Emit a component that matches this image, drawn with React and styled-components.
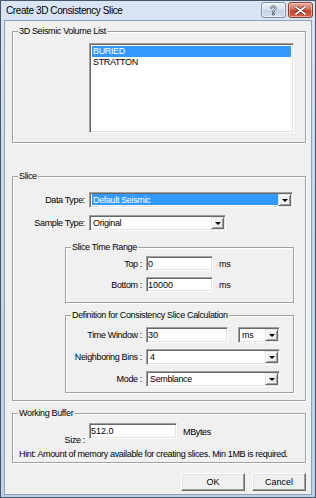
import React from 'react';
import styled, {createGlobalStyle} from 'styled-components';

const GlobalStyle = createGlobalStyle`
html, body {
    margin: 0;
    padding: 0;
    background: #ffffff;
}
body {
    font-family: "Liberation Sans", Arial, sans-serif;
    font-size: 9px;
    line-height: 12px;
    letter-spacing: -0.35px;
    color: #000;
}
* {
    box-sizing: border-box;
}
`;

const Window = styled.div`
width: 316px;
height: 498px;
display: flex;
flex-direction: column;
border: 1px solid #44576b;
padding: 0 3px 2px 3px;
background: linear-gradient(180deg, #d9e5f3 0%, #c6d6e9 40%, #bdd0e6 100%);
`;

const TitleBar = styled.div`
height: 19px;
display: flex;
align-items: center;
justify-content: space-between;
padding: 0 0 0 2px;
font-size: 10px;
letter-spacing: -0.4px;
`;

const Caption = styled.span`
color: #000;
`;

const TitleButtons = styled.div`
display: flex;
gap: 2px;
align-self: flex-start;
margin-top: 1px;
margin-right: -1px;
`;

const CapButton = styled.div`
width: 25px;
height: 16px;
border-radius: 3px;
display: flex;
align-items: center;
justify-content: center;
border: 1px solid ${p => (p.$close ? '#8b3b2f' : '#7f93a9')};
background: ${p =>
    p.$close
        ? 'linear-gradient(180deg, #e9a99b 0%, #d8705d 45%, #c3412b 55%, #d7654f 100%)'
        : 'linear-gradient(180deg, #eef3f9 0%, #d9e3ee 45%, #c6d3e2 55%, #d3dfec 100%)'};
box-shadow: inset 0 0 0 1px rgba(255, 255, 255, 0.45);
`;

const Client = styled.div`
flex: 1;
display: flex;
flex-direction: column;
background: #f0f0f0;
border: 1px solid #8ea2b8;
padding: 4px 5px 0 7px;
`;

const Group = styled.fieldset`
margin: ${p => p.$margin || '0'};
padding: ${p => p.$pad || '0'};
border: 1px solid #a0a0a0;
box-shadow: inset 1px 1px 0 #ffffff, 1px 1px 0 #ffffff;
min-width: 0;
display: flex;
flex-direction: column;
`;

const Legend = styled.legend`
margin-left: 5px;
padding: 0 1px;
line-height: 12px;
height: 12px;
background: #f0f0f0;
`;

const ListBox = styled.div`
width: 205px;
height: 90px;
margin-left: 76px;
background: #fff;
border: 1px solid;
border-color: #a0a0a0 #ffffff #ffffff #a0a0a0;
box-shadow: inset 1px 1px 0 #696969, inset -1px -1px 0 #e3e3e3;
padding: 2px;
`;

const ListItem = styled.div`
height: 11px;
line-height: 11px;
padding-left: 1px;
background: ${p => (p.$selected ? '#3399ff' : 'transparent')};
color: ${p => (p.$selected ? '#fff' : '#000')};
`;

const Rows = styled.div`
display: flex;
flex-direction: column;
gap: ${p => p.$gap || 6}px;
`;

const Row = styled.div`
display: flex;
align-items: ${p => p.$align || 'center'};
`;

const Label = styled.span`
width: ${p => p.$width}px;
margin-right: 4px;
text-align: right;
white-space: nowrap;
margin-top: ${p => p.$top || 0}px;
`;

const Unit = styled.span`
margin-left: ${p => p.$gap || 6}px;
margin-top: ${p => p.$top || 0}px;
`;

const Edit = styled.input`
width: ${p => p.$width}px;
height: ${p => p.$height || 15}px;
margin: 0;
padding: 0 0 0 1px;
font: inherit;
color: #000;
background: #fff;
border: 1px solid;
border-color: #a0a0a0 #ffffff #ffffff #a0a0a0;
box-shadow: inset 1px 1px 0 #696969, inset -1px -1px 0 #e3e3e3;
outline: none;
`;

const ComboBox = styled.div`
width: ${p => p.$width}px;
height: 16px;
margin-left: ${p => p.$gap || 0}px;
display: flex;
background: #fff;
border: 1px solid;
border-color: #a0a0a0 #ffffff #ffffff #a0a0a0;
box-shadow: inset 1px 1px 0 #696969, inset -1px -1px 0 #e3e3e3;
padding: 2px;
`;

const ComboValue = styled.div`
flex: 1;
line-height: 12px;
padding-left: 1px;
margin-top: -1px;
background: ${p => (p.$selected ? '#3399ff' : 'transparent')};
color: ${p => (p.$selected ? '#fff' : '#000')};
white-space: nowrap;
overflow: hidden;
`;

const DropButton = styled.div`
width: 13px;
margin: -1px -1px -1px 0;
display: flex;
align-items: center;
justify-content: center;
background: #f0f0f0;
border: 1px solid;
border-color: #e3e3e3 #696969 #696969 #e3e3e3;
box-shadow: inset 1px 1px 0 #ffffff, inset -1px -1px 0 #a0a0a0;
`;

const Arrow = styled.span`
width: 0;
height: 0;
border-left: 3px solid transparent;
border-right: 3px solid transparent;
border-top: 3px solid #000;
margin-top: 1px;
`;

const Hint = styled.div`
padding-left: 6px;
margin-top: 2px;
white-space: nowrap;
`;

const ButtonBar = styled.div`
display: flex;
justify-content: flex-end;
gap: 7px;
margin-top: 10px;
`;

const Button = styled.button`
width: ${p => p.$width}px;
height: 18px;
margin: 0;
padding: 0;
font: inherit;
color: #000;
background: #f0f0f0;
border: 1px solid;
border-color: #ffffff #696969 #696969 #ffffff;
box-shadow: inset -1px -1px 0 #a0a0a0, inset 1px 1px 0 #e3e3e3;
`;

const Combo = ({width, value, selected, gap}) => (
    <ComboBox $width={width} $gap={gap}>
        <ComboValue $selected={selected}>{value}</ComboValue>
        <DropButton><Arrow /></DropButton>
    </ComboBox>
);

const App = () => {
    return (
        <>
            <GlobalStyle />
            <Window>
                <TitleBar>
                    <Caption>Create 3D Consistency Slice</Caption>
                    <TitleButtons>
                        <CapButton>
                            <svg width="9" height="11" viewBox="0 0 9 11">
                                <path d="M1.5 3.2 C1.5 1.4 3 0.8 4.5 0.8 C6.2 0.8 7.5 1.7 7.5 3.2 C7.5 4.8 5.2 5 5.2 6.8 L5.2 7.4 L3.6 7.4 L3.6 6.6 C3.6 4.6 5.8 4.4 5.8 3.2 C5.8 2.5 5.3 2.1 4.5 2.1 C3.7 2.1 3.2 2.6 3.2 3.3 Z M3.6 8.4 L5.2 8.4 L5.2 10 L3.6 10 Z" fill="#f6f9fc" stroke="#3d4c5c" strokeWidth="0.8" />
                            </svg>
                        </CapButton>
                        <CapButton $close>
                            <svg width="11" height="9" viewBox="0 0 11 9">
                                <path d="M1 1 L10 8 M10 1 L1 8" stroke="#5a1a10" strokeWidth="3.2" strokeLinecap="round" />
                                <path d="M1 1 L10 8 M10 1 L1 8" stroke="#ffffff" strokeWidth="1.8" strokeLinecap="round" />
                            </svg>
                        </CapButton>
                    </TitleButtons>
                </TitleBar>
                <Client>
                    <Group $pad="6px 11px 9px 0">
                        <Legend>3D Seismic Volume List</Legend>
                        <ListBox>
                            <ListItem $selected>BURIED</ListItem>
                            <ListItem>STRATTON</ListItem>
                        </ListBox>
                    </Group>

                    <Group $margin="27px 0 0 0" $pad="10px 11px 7px 0">
                        <Legend>Slice</Legend>
                        <Rows $gap={7}>
                            <Row>
                                <Label $width={72}>Data Type:</Label>
                                <Combo width={204} value="Default Seismic" selected />
                            </Row>
                            <Row>
                                <Label $width={72}>Sample Type:</Label>
                                <Combo width={137} value="Original" />
                            </Row>
                        </Rows>

                        <Group $margin="10px 0 0 52px" $pad="3px 0 10px 0">
                            <Legend>Slice Time Range</Legend>
                            <Rows $gap={6}>
                                <Row>
                                    <Label $width={76}>Top :</Label>
                                    <Edit $width={67} readOnly value="0" />
                                    <Unit>ms</Unit>
                                </Row>
                                <Row>
                                    <Label $width={76}>Bottom :</Label>
                                    <Edit $width={67} readOnly value="10000" />
                                    <Unit>ms</Unit>
                                </Row>
                            </Rows>
                        </Group>

                        <Group $margin="6px 0 0 52px" $pad="6px 0 5px 0">
                            <Legend>Definition for Consistency Slice Calculation</Legend>
                            <Rows $gap={6}>
                                <Row>
                                    <Label $width={76}>Time Window :</Label>
                                    <Edit $width={82} $height={16} readOnly value="30" />
                                    <Combo width={42} value="ms" gap={10} />
                                </Row>
                                <Row>
                                    <Label $width={76}>Neighboring Bins :</Label>
                                    <Combo width={134} value="4" />
                                </Row>
                                <Row>
                                    <Label $width={76}>Mode :</Label>
                                    <Combo width={134} value="Semblance" />
                                </Row>
                            </Rows>
                        </Group>
                    </Group>

                    <Group $margin="6px 0 0 0" $pad="4px 0 2px 0">
                        <Legend>Working Buffer</Legend>
                        <Row $align="flex-start">
                            <Label $width={72} $top={11}>Size :</Label>
                            <Edit $width={88} $height={16} readOnly value="512.0" />
                            <Unit $gap={6} $top={3}>MBytes</Unit>
                        </Row>
                        <Hint>Hint: Amount of memory available for creating slices. Min 1MB is required.</Hint>
                    </Group>

                    <ButtonBar>
                        <Button $width={64}>OK</Button>
                        <Button $width={54}>Cancel</Button>
                    </ButtonBar>
                </Client>
            </Window>
        </>
    );
};

export default App;
